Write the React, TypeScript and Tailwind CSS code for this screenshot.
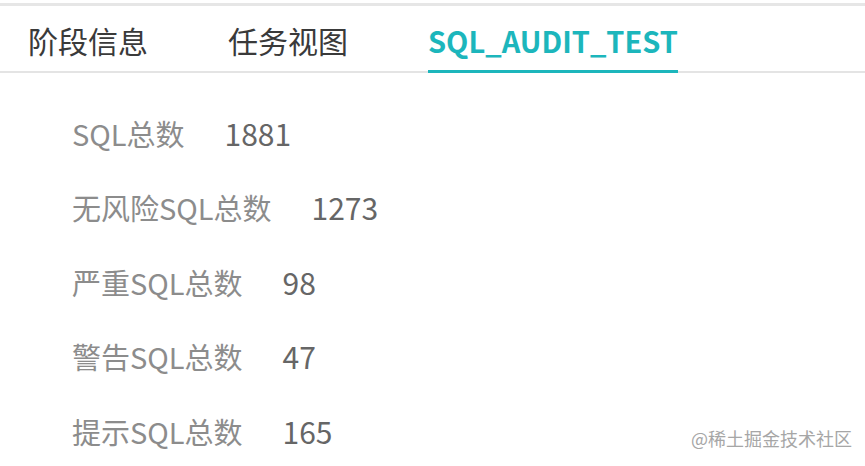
const stats = [
  { label: "SQL总数", value: "1881" },
  { label: "无风险SQL总数", value: "1273" },
  { label: "严重SQL总数", value: "98" },
  { label: "警告SQL总数", value: "47" },
  { label: "提示SQL总数", value: "165" },
];

const tabs = ["阶段信息", "任务视图", "SQL_AUDIT_TEST"];

export default function App() {
  const active = 2;
  return (
    <div
      className="relative h-[466px] w-[865px] overflow-hidden bg-white"
      style={{ fontFamily: '"Noto Sans CJK SC", "Noto Sans", sans-serif' }}
    >
      <div className="mt-[3px] h-[3px] bg-[#e6e6e6]" />
      <div className="flex h-[67px] items-stretch gap-[80px] border-b-2 border-[#e4e4e4] pl-[28px]">
        {tabs.map((t, i) => (
          <div
            key={t}
            className={
              i === active
                ? "-mb-[2px] flex items-center border-b-[3px] border-[#1cb6bc] pt-[5px] text-[29px] font-bold text-[#1cb6bc]"
                : "flex items-center pt-[4px] text-[30px] text-[#3a3a3a]"
            }
          >
            {t}
          </div>
        ))}
      </div>
      <div className="pl-[72px] pt-[23px]">
        {stats.map((s) => (
          <div key={s.label} className="flex h-[74.5px] items-center">
            <span className="text-[29px] text-[#8c8c8c]">{s.label}</span>
            <span className="ml-[40px] text-[30px] text-[#666666]">{s.value}</span>
          </div>
        ))}
      </div>
      <div className="absolute bottom-[14px] right-[13px] text-[18px] text-[#a6a6a6]">
        @稀土掘金技术社区
      </div>
    </div>
  );
}
